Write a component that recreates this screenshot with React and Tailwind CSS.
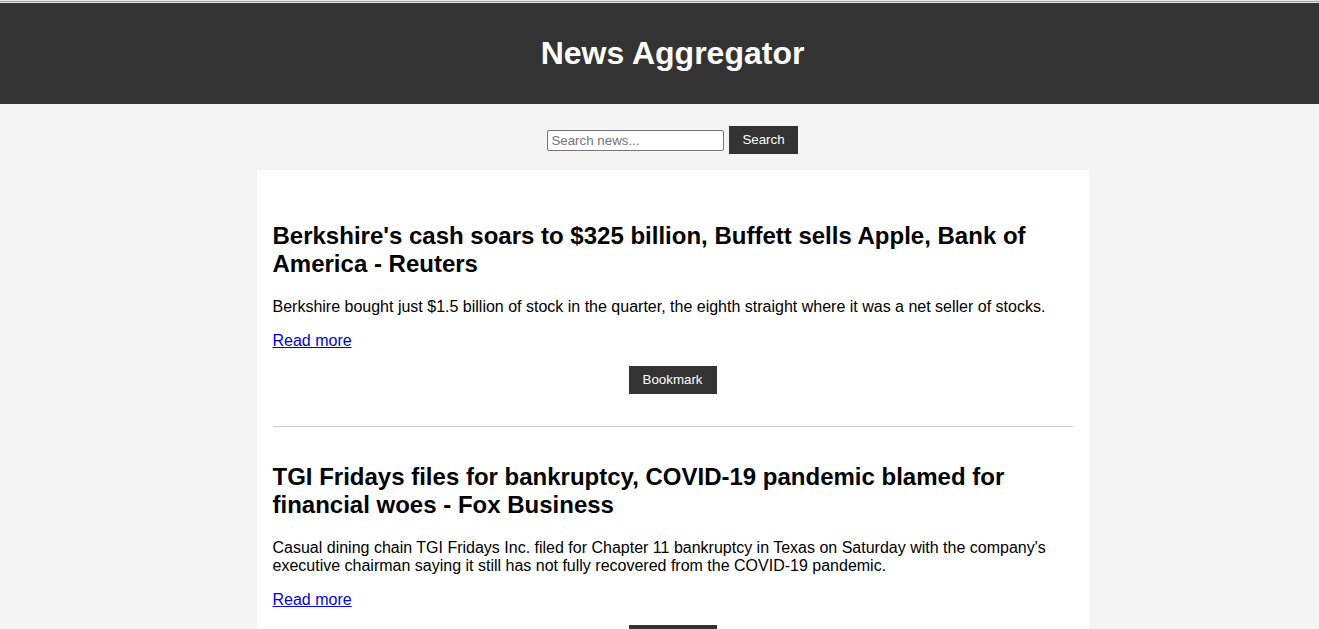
import React from 'react';

const articles = [
  {
    title: "Berkshire's cash soars to $325 billion, Buffett sells Apple, Bank of America - Reuters",
    description:
      'Berkshire bought just $1.5 billion of stock in the quarter, the eighth straight where it was a net seller of stocks.',
  },
  {
    title: 'TGI Fridays files for bankruptcy, COVID-19 pandemic blamed for financial woes - Fox Business',
    description:
      "Casual dining chain TGI Fridays Inc. filed for Chapter 11 bankruptcy in Texas on Saturday with the company's executive chairman saying it still has not fully recovered from the COVID-19 pandemic.",
  },
];

function App() {
  return (
    <div className="min-h-screen bg-[#f4f4f4] font-['Liberation_Sans',Arial,sans-serif] text-black">
      {/* Top strip */}
      <div className="h-[3px] bg-[#e6e6e6] flex flex-col justify-center">
        <div className="h-px bg-[#9c9ca4]"></div>
      </div>

      <div className="pl-[26px]">
        {/* Header */}
        <header className="h-[101px] bg-[#333] -ml-[26px] pl-[26px] flex items-center justify-center">
          <h1 className="text-[32px] font-bold text-white leading-[37px]">News Aggregator</h1>
        </header>

        {/* Search */}
        <div className="flex justify-center items-center pt-[22px] pb-[16px]">
          <input
            type="text"
            placeholder="Search news..."
            className="w-[177px] h-[21px] bg-white border border-[#767676] rounded-[2px] px-[3px] text-[13.33px] placeholder-[#757575] outline-none"
          />
          <button className="ml-[5px] h-[28px] px-[13px] bg-[#333] text-white text-[13.33px]">
            Search
          </button>
        </div>

        {/* Articles */}
        <main className="w-[832px] mx-auto bg-white px-4 py-4">
          {articles.map((article, index) => (
            <article key={index} className="pt-4 pb-4 border-b border-[#ccc]">
              <h2 className="text-[24px] font-bold leading-[28px] my-[20px]">{article.title}</h2>
              <p className="text-[16px] leading-[18px] mb-4">{article.description}</p>
              <a href="#" className="block w-fit text-[16px] leading-[18px] text-[#0000ee] underline">
                Read more
              </a>
              <div className="text-center mt-[16px] mb-4">
                <button className="h-[28px] px-[14px] bg-[#333] text-white text-[13.33px]">Bookmark</button>
              </div>
            </article>
          ))}
        </main>
      </div>
    </div>
  );
}

export default App;
